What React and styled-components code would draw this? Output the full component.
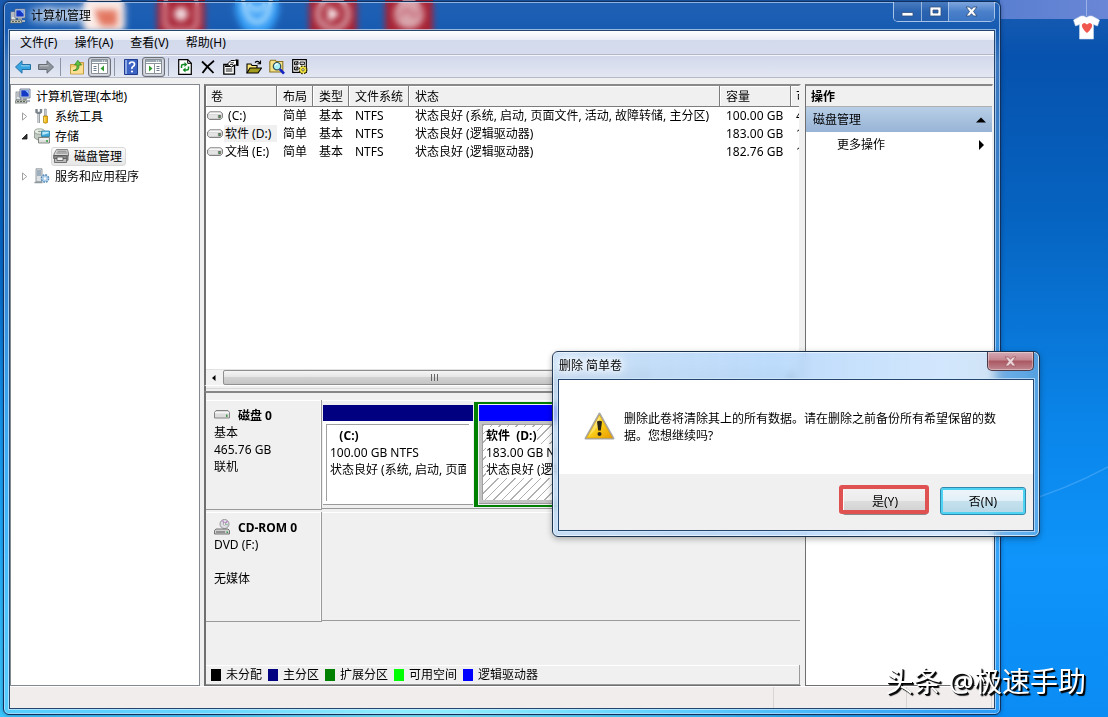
import React from 'react';
import styled, { createGlobalStyle, css } from 'styled-components';

const GlobalStyle = createGlobalStyle`
  *, *::before, *::after { box-sizing: border-box; }
  body { margin: 0; }
  body, button, table {
    font-family: 'Noto Sans', 'Noto Sans CJK SC', sans-serif;
    font-size: 12px;
    line-height: 17px;
    color: #000;
  }
  button { margin: 0; padding: 0; border: 0; background: none; }
  ul { margin: 0; padding: 0; list-style: none; }
  svg { display: block; flex: none; }
`;

/* ---------- desktop ---------- */

const Desktop = styled.div`
  position: relative;
  height: 100vh;
  min-height: 717px;
  overflow: hidden;
  background:
    radial-gradient(ellipse 560px 300px at 38% 104%, #8cf6ff 0%, rgba(80, 210, 255, 0.95) 40%, rgba(30, 150, 250, 0) 100%),
    radial-gradient(ellipse 500px 420px at 0% 100%, #2cc0ff 0%, rgba(30, 160, 250, 0) 100%),
    linear-gradient(to bottom, #1a5cb2 0%, #0652ae 8%, #0663c0 30%, #0a84e8 58%, #0e94fa 78%, #0a8cf4 100%);
`;

const DesktopTopBand = styled.div`
  position: absolute;
  top: 0;
  right: 0;
  width: 108px;
  height: 19px;
  background: linear-gradient(to right, #5a7fd0, #6a86d6);
`;

const Shortcuts = styled.div`
  display: grid;
  grid-template-columns: repeat(5, 76px);
  justify-items: center;
  padding-left: 67px;
`;

const Streaks = styled.svg`
  position: absolute;
  right: 0;
  bottom: 200px;
`;

const Shirt = styled.svg`
  position: absolute;
  top: 0;
  right: 6px;
`;

const Watermark = styled.div`
  position: absolute;
  right: 22px;
  bottom: 16px;
  font-size: 28px;
  line-height: 40px;
  color: #fff;
  text-shadow: 2px 2px 1px #000, 1px 1px 0 #111;
  white-space: nowrap;
  pointer-events: none;
`;

/* ---------- window chrome ---------- */

const Frame = styled.section`
  position: absolute;
  display: flex;
  flex-direction: column;
  padding: 0 5px 5px;
  border: 1px solid #12305c;
  border-radius: 6px;
`;

const MainFrame = styled(Frame)`
  inset: 1px 107px 2px 3px;
  background: linear-gradient(to bottom, rgba(255, 255, 255, 0.03) 0, rgba(255, 255, 255, 0.03) 28px, rgba(255, 255, 255, 0.22) 60px, rgba(255, 255, 255, 0.14) 100%);
  backdrop-filter: blur(3px);
  box-shadow: inset 0 0 0 1px rgba(200, 225, 250, 0.65), 0 0 4px rgba(0, 20, 60, 0.4);
`;

const DialogFrame = styled(Frame)`
  top: 351px;
  left: 552px;
  width: 488px;
  border-color: #1c3350;
  background: linear-gradient(to right, rgba(190, 216, 243, 0.82), rgba(170, 209, 250, 0.78) 45%, rgba(195, 222, 252, 0.75) 80%, rgba(160, 195, 225, 0.5));
  backdrop-filter: blur(4px);
  box-shadow: inset 0 0 0 1px rgba(240, 248, 255, 0.75), 0 2px 6px rgba(0, 0, 0, 0.3);
`;

const TitleBar = styled.header`
  display: flex;
  align-items: flex-start;
  height: ${(p) => p.$height}px;
`;

const Title = styled.h1`
  flex: 1;
  display: flex;
  align-items: center;
  gap: 5px;
  height: 27px;
  margin: 0;
  padding-left: 1px;
  font-size: 12px;
  font-weight: 400;
  text-shadow: 0 0 6px #fff, 0 0 8px #fff, 0 0 12px rgba(255, 255, 255, 0.9), 0 0 16px rgba(255, 255, 255, 0.8);
`;

const CaptionGroup = styled.div`
  display: flex;
  border: 1px solid rgba(215, 230, 248, 0.75);
  border-top: 0;
  border-radius: 0 0 5px 5px;
  overflow: hidden;
`;

const CaptionButton = styled.button`
  display: flex;
  align-items: center;
  justify-content: center;
  width: ${(p) => (p.$wide ? 46 : 27)}px;
  height: 19px;
  background: ${(p) =>
    p.$wide
      ? 'linear-gradient(to bottom, #7fa6de, #4b80ca 50%, #3c76c4)'
      : 'linear-gradient(to bottom, #4a7cc0, #2a63b0 50%, #245eae)'};
  & + & { border-left: 1px solid rgba(215, 230, 248, 0.6); }
`;

const DialogClose = styled.button`
  display: flex;
  align-items: center;
  justify-content: center;
  width: 47px;
  height: 19px;
  border: 1px solid #4d3a48;
  border-top: 0;
  border-radius: 0 0 5px 5px;
  background: linear-gradient(to bottom, #d3aab4, #c3858f 45%, #aa5660 50%, #c08890);
  box-shadow: inset 0 0 0 1px rgba(255, 255, 255, 0.35);
`;

const Client = styled.div`
  flex: 1;
  display: flex;
  flex-direction: column;
  min-height: 0;
  border: 1px solid #24466e;
  box-shadow: 0 0 0 1px rgba(215, 235, 252, 0.65);
  background: #f0f0f0;
`;

/* ---------- menu + toolbar ---------- */

const MenuBar = styled.nav`
  display: flex;
  gap: 1px;
  height: 24px;
  padding-left: 2px;
  border-bottom: 1px solid #b2b8c6;
  background: linear-gradient(to bottom, #fff 0, #eaedf7 9px, #d3daec 9px, #d6dced 100%);
`;

const MenuItem = styled.button`
  padding: 0 8px;
`;

const ToolBar = styled.div`
  display: flex;
  align-items: center;
  height: 23px;
  padding-left: 1px;
  border-top: 1px solid #f3f5fa;
  border-bottom: 1px solid #b4b9c4;
  background: linear-gradient(to bottom, #d2d8eb, #e3e7f3);
`;

const ToolButton = styled.button`
  display: flex;
  align-items: center;
  justify-content: center;
  width: 23px;
  height: 20px;
  border-radius: 3px;
  ${(p) =>
    p.$pressed &&
    css`
      border: 1px solid #6c7078;
      background: #dcdfe8;
      box-shadow: inset 0 0 2px rgba(0, 0, 0, 0.35);
    `}
`;

const ToolSeparator = styled.span`
  width: 8px;
  height: 18px;
  background: linear-gradient(#8d94a5, #8d94a5) 3px 0 / 1px 100% no-repeat;
`;

/* ---------- body panes ---------- */

const Body = styled.main`
  flex: 1;
  display: grid;
  grid-template-columns: 190px minmax(0, 1fr) 188px;
  column-gap: 4px;
  min-height: 0;
  padding: 6px 1px 0 0;
`;

const TreePane = styled.ul`
  padding-top: 1px;
  border: 1px solid #828790;
  background: #fff;
`;

const TreeRow = styled.li`
  display: flex;
  align-items: center;
  gap: 5px;
  height: 20px;
  padding-left: ${(p) => p.$indent}px;
`;

const SelectedNode = styled.span`
  display: flex;
  align-items: center;
  gap: 5px;
  height: 19px;
  padding: 0 3px 0 1px;
  border: 1px solid #d9d9d9;
  border-radius: 3px;
  background: linear-gradient(to bottom, #fafafa, #e6e6e6);
`;

const Twisty = styled.button`
  display: flex;
  align-items: center;
  justify-content: center;
  width: 9px;
  height: 16px;
`;

const Center = styled.div`
  display: flex;
  flex-direction: column;
  min-width: 0;
`;

const ListPane = styled.div`
  flex: 1;
  display: flex;
  flex-direction: column;
  min-width: 0;
  border: solid #707070;
  border-width: 2px 0 0 2px;
  border-top-color: #8a8a8a;
  border-right: 2px solid #f0f0f0;
  background: #fff;
`;

const VolumeTable = styled.table`
  width: 100%;
  table-layout: fixed;
  border-collapse: separate;
  border-spacing: 0;
`;

const HeadCell = styled.th`
  height: 21px;
  padding: 0 0 0 6px;
  overflow: hidden;
  border-right: 1px solid #7c7c7c;
  border-bottom: 1px solid #7c7c7c;
  background: #f0f0f0;
  box-shadow: inset 1px 1px 0 #fff;
  font-weight: 400;
  text-align: left;
  white-space: nowrap;
  &:first-child { padding-left: 5px; }
  &:last-child { border-right: 0; padding-left: 5px; }
`;

const Cell = styled.td`
  height: 18px;
  padding: 0 0 1px 6px;
  overflow: hidden;
  vertical-align: top;
  white-space: pre;
  &:first-child { padding-left: 1px; }
  &:last-child { padding-left: 5px; }
`;

const VolumeName = styled.span`
  display: flex;
  align-items: center;
  gap: 1px;
`;

const NameText = styled.span`
  flex: 1;
  padding-left: 1px;
  background: ${(p) => (p.$selected ? '#f0f0f0' : 'transparent')};
`;

const ScrollBar = styled.div`
  display: flex;
  height: 16px;
  margin-top: auto;
  background: #ececec;
  border-top: 1px solid #e2e2e2;
`;

const ScrollArrow = styled.button`
  display: flex;
  align-items: center;
  justify-content: center;
  width: 17px;
  background: #f2f2f2;
`;

const ScrollTrack = styled.div`
  flex: 1;
`;

const ScrollThumb = styled.div`
  display: flex;
  align-items: center;
  justify-content: center;
  width: 76%;
  height: 15px;
  border: 1px solid #8f8f8f;
  border-radius: 2px;
  background: linear-gradient(to bottom, #f5f5f5, #e6e6e6 45%, #d2d2d2 50%, #c4c4c4);
`;

const Splitter = styled.div`
  height: 6px;
  border-left: 2px solid #707070;
  border-top: 1px solid #fff;
  background: linear-gradient(#d8d8d8, #d8d8d8) 0 2px / 100% 1px no-repeat #f0f0f0;
`;

const GraphPane = styled.div`
  display: flex;
  flex-direction: column;
  padding-top: 7px;
  border: solid #707070;
  border-width: 2px 1px 1px 2px;
  border-right-color: #f0f0f0;
  border-top-color: #868686;
`;

const Disks = styled.div`
  display: flex;
  flex-direction: column;
  gap: 2px;
  min-height: 265px;
`;

const DiskRow = styled.div`
  display: grid;
  grid-template-columns: 116px minmax(0, 1fr);
  height: 110px;
`;

const DiskLabel = styled.div`
  padding: 7px 0 0 8px;
  border: 1px solid #9a9a9a;
  border-width: 0 1px 1px 0;
  box-shadow: inset 0 1px 0 #fff, inset -1px 0 0 #fafafa;
  white-space: pre-line;
`;

const DiskName = styled.h2`
  display: flex;
  align-items: center;
  gap: 8px;
  height: 17px;
  margin: 0;
  font-size: 12px;
  font-weight: 700;
`;

const DiskBody = styled.div`
  display: flex;
  gap: 1px;
  height: 109px;
  padding: 2px 0 1px 0;
  border-bottom: 1px solid #9a9a9a;
  box-shadow: inset 0 1px 0 #fff;
`;

const Extended = styled.div`
  flex: 1;
  display: flex;
  gap: 1px;
  min-width: 0;
  padding: 1px;
  border: solid #008000;
  border-width: 2px 4px;
`;

const Volume = styled.div`
  display: flex;
  flex-direction: column;
  flex: ${(p) => (p.$grow ? '1 1 0' : '0 0 150px')};
  min-width: 0;
  margin: ${(p) => (p.$grow ? 0 : '3px 0 2px 1px')};
  border-bottom: 1px solid #9a9a9a;
`;

const VolumeBar = styled.div`
  height: 16px;
  background: ${(p) => p.$color};
`;

const hatch = 'repeating-linear-gradient(135deg, #b0b0b0 0 1px, #fff 1px 6px)';

const VolumeFill = styled.div`
  flex: 1;
  display: flex;
  min-height: 0;
  padding: 3px 4px 3px 3px;
  background: ${(p) => (p.$selected ? '#c3c3c3' : '#fff')};
`;

const VolumeBox = styled.div`
  flex: 1;
  min-width: 0;
  padding: 2px 3px 0 3px;
  border: 1px solid #a0a0a0;
  border-width: 1px 0 0 1px;
  background: ${(p) => (p.$selected ? hatch : '#fff')};
`;

const VolumeLine = styled.div`
  width: fit-content;
  max-width: 100%;
  overflow: hidden;
  white-space: pre;
  background: #fff;
  font-weight: ${(p) => (p.$strong ? 700 : 400)};
`;

const Legend = styled.ul`
  display: flex;
  align-items: center;
  gap: 6px;
  height: 20px;
  && { padding-left: 5px; }
  border: 1px solid #9a9a9a;
  border-width: 0 1px 1px 0;
  box-shadow: inset 0 1px 0 #fff;
`;

const LegendItem = styled.li`
  display: flex;
  align-items: center;
  gap: 5px;
  &::before {
    content: '';
    width: 10px;
    height: 12px;
    background: ${(p) => p.$color};
  }
`;

const ActionPane = styled.aside`
  border: solid #707070;
  border-width: 2px 0 1px 1px;
  border-top-color: #868686;
  border-right: 1px solid #f0f0f0;
  background: #fff;
`;

const ActionHeading = styled.h2`
  height: 21px;
  margin: 0;
  padding: 2px 0 0 5px;
  border-bottom: 1px solid #b0b0b0;
  background: #f0f0f0;
  font-size: 12px;
  font-weight: 700;
`;

const ActionRow = styled.button`
  display: flex;
  align-items: center;
  justify-content: space-between;
  width: 100%;
  height: 25px;
  padding: 0 6px 0 ${(p) => (p.$group ? 7 : 31)}px;
  background: ${(p) => (p.$group ? 'linear-gradient(to bottom, #b8cfe6, #97b3d6)' : 'transparent')};
`;

const StatusBar = styled.footer`
  display: flex;
  justify-content: flex-end;
  height: 22px;
  border-top: 1px solid #fff;
  background: #f1eded;
`;

const StatusCell = styled.div`
  width: ${(p) => p.$width}px;
  border-left: 1px solid #d9d5d5;
`;

/* ---------- dialog ---------- */

const Message = styled.div`
  display: flex;
  align-items: flex-start;
  gap: 9px;
  height: 94px;
  padding: 30px 20px 0 25px;
  background: #fff;
`;

const MessageText = styled.p`
  flex: 1;
  margin: 0;
`;

const IconSlot = styled.span`
  padding-top: 2px;
`;

const DialogActions = styled.div`
  display: flex;
  justify-content: flex-end;
  gap: 12px;
  height: 56px;
  padding: 13px 7px 0;
`;

const PushButton = styled.button`
  position: relative;
  width: 86px;
  height: 28px;
  border: 1px solid ${(p) => (p.$default ? '#2f88ad' : '#8a8a8a')};
  border-radius: 3px;
  background: ${(p) =>
    p.$default
      ? 'linear-gradient(to bottom, #eff6fa, #e0eff7 50%, #c5e1ee 50%, #b6d7e6)'
      : 'linear-gradient(to bottom, #f2f2f2, #ebebeb 50%, #dddddd 50%, #cfcfcf)'};
  box-shadow: ${(p) => (p.$default ? 'inset 0 0 0 2px #4fd3f2' : 'inset 0 0 0 1px #fafafa')};
  ${(p) =>
    p.$marked &&
    css`
      &::after {
        content: '';
        position: absolute;
        inset: -3px -2px 0 -4px;
        border: 4px solid #e05252;
        border-radius: 3px;
      }
    `}
`;

/* ---------- drawings ---------- */

const ComputerIcon = () => (
  <svg width="16" height="16" viewBox="0 0 16 16">
    <rect x="1" y="4" width="5" height="8" fill="#dfe3e6" stroke="#7b8288" strokeWidth=".8" />
    <path d="M2 6h3M2 8h3" stroke="#8d959b" />
    <path d="M5 1h10v9H5z" fill="#dbe2ea" stroke="#5a6a86" strokeWidth=".8" />
    <path d="M6.300 2.300h7.400v6.300H6.300z" fill="#1238c4" />
    <path d="M10 2.300h3.700v4z" fill="#8fb8f8" />
    <path d="M8 10h4v2H8z" fill="#9aa3ad" />
    <path d="M1 12h10l1 3H0z" fill="#c9cec9" stroke="#5d645d" strokeWidth=".7" />
    <path d="M2 13.500h2M5 13.500h2M8 13.500h2" stroke="#4d554d" strokeWidth=".9" />
    <path d="M12 12h3v2h-3z" fill="#aab2bb" />
  </svg>
);

const ToolsIcon = () => (
  <svg width="16" height="16" viewBox="0 0 16 16">
    <path d="M2.500 1v3L5 5.500 7 4V1M4.700 5.500V15" fill="none" stroke="#7c848b" strokeWidth="2.400" />
    <path d="M4.700 6V15" stroke="#dde1e4" strokeWidth="1" />
    <path d="M10.500 1h1.800v7h-1.800z" fill="#c9ced2" stroke="#81888e" strokeWidth=".6" />
    <path d="M9.500 8h4v6.500q-2 1.500-4 0z" fill="#f2b90f" stroke="#a87a08" strokeWidth=".7" />
    <path d="M10.800 9v5" stroke="#ffe48a" />
  </svg>
);

const StorageIcon = () => (
  <svg width="16" height="16" viewBox="0 0 16 16">
    <path d="M.5 3.500v6.500q3 3 8 2V4z" fill="#c3ccc4" stroke="#7c867a" strokeWidth=".7" />
    <ellipse cx="5.500" cy="3.500" rx="5" ry="2.700" fill="#e6ece3" stroke="#7c867a" strokeWidth=".7" />
    <ellipse cx="5.500" cy="3.500" rx="1.600" ry=".8" fill="#8fa08f" />
    <path d="M7.500 3h8v5.500h-8z" fill="#3fa8d8" stroke="#24789f" strokeWidth=".8" />
    <path d="M8.300 3.700h6.500v1.600L8.300 7z" fill="#b8e8fa" />
    <path d="M4.500 9.500h11V15h-11z" fill="#dcdfdc" stroke="#697069" strokeWidth=".8" />
    <path d="M5.500 11h9" stroke="#fff" />
    <path d="M12 13h2" stroke="#2a9a3a" strokeWidth="1.500" />
  </svg>
);

const DiskMgmtIcon = () => (
  <svg width="16" height="16" viewBox="0 0 16 16">
    <path d="M3.500 1.500h11l1 3.500v3H1V6z" fill="#d8d8d8" stroke="#6b6b6b" strokeWidth=".8" />
    <path d="M4.500 3.200h9M3.500 5h11" stroke="#777" strokeWidth=".9" />
    <path d="M.7 7.500h13v3H.7z" fill="#8b8b8b" stroke="#4d4d4d" strokeWidth=".8" />
    <path d="M1.500 10.500h12v4h-12z" fill="#bdbdbd" stroke="#575757" strokeWidth=".8" />
    <path d="M4 9h6v3.500H4z" fill="#f1f1f1" stroke="#555" strokeWidth=".8" />
    <path d="M13.700 7.500L15.500 6v6l-1.800 2z" fill="#777" />
  </svg>
);

const ServicesIcon = () => (
  <svg width="16" height="16" viewBox="0 0 16 16">
    <path d="M2 .8h6v13H2z" fill="#dde1e4" stroke="#7f868c" strokeWidth=".8" />
    <path d="M3 3h4M3 5h4M3 7h4" stroke="#5f7d96" />
    <path d="M.5 14.500h8" stroke="#8d999f" strokeWidth="1.500" />
    <circle cx="11" cy="10.500" r="3.600" fill="#b9d7ee" stroke="#5b8db8" strokeWidth="1.600" strokeDasharray="1.800 1" />
    <circle cx="11" cy="10.500" r="2.600" fill="#a9cce9" />
    <circle cx="11" cy="10.500" r="1.200" fill="#fff" />
  </svg>
);

const DriveIcon = () => (
  <svg width="16" height="10" viewBox="0 0 16 10">
    <path d="M3 .8h10.500l2 1.700v4l-2 2H2.500l-2-1.800V3z" fill="#cfcfcf" stroke="#777" strokeWidth=".9" strokeLinejoin="round" />
    <path d="M3 1.500h10.300l1.200 1.700H1.500z" fill="#f8f8f8" />
    <path d="M1.500 4h9v3h-9z" fill="#e4e4e4" />
    <path d="M11.300 4h2.500v3.200h-2.500z" fill="#5f6a5f" />
    <path d="M12 5h1v1h-1z" fill="#35b043" />
  </svg>
);

const BareDriveIcon = () => (
  <svg width="16" height="16" viewBox="0 0 16 16">
    <path d="M2 2.500h12l1.500 2v5.500H.5V4.500z" fill="#dcdcdc" stroke="#777" strokeWidth=".9" />
    <path d="M1 4.800h14" stroke="#fff" />
    <path d="M12 6.500h1.500v2.500H12z" fill="#3f9a4a" />
  </svg>
);

const CdDriveIcon = () => (
  <svg width="16" height="18" viewBox="0 0 16 18">
    <circle cx="10.500" cy="5" r="4.500" fill="#dedee4" stroke="#8b8b92" strokeWidth=".9" />
    <path d="M10.500 5l3-3M10.500 5l-2-3.500" stroke="#b884c4" strokeWidth="1.300" />
    <path d="M10.500 5l3.500 1" stroke="#8dc59a" strokeWidth="1.200" />
    <circle cx="10.500" cy="5" r="1.200" fill="#fff" stroke="#888" strokeWidth=".6" />
    <path d="M2 10h12l1.500 1.500v3.500H.5v-3.500z" fill="#d0d0d0" stroke="#666" strokeWidth=".9" />
    <path d="M2 13h9" stroke="#555" />
    <path d="M12.500 12.500h1.500v1.500h-1.500z" fill="#3f9a4a" />
  </svg>
);

const ArrowIcon = ({ flip, fill, edge }) => (
  <svg width="16" height="14" viewBox="0 0 16 14">
    <path
      d={flip ? 'M15.500 7L9 .8v3.700H.5v5H9v3.700z' : 'M.5 7L7 .8v3.700h8.500v5H7v3.700z'}
      fill={fill}
      stroke={edge}
      strokeLinejoin="round"
    />
    <path d={flip ? 'M2 5.800h8.500' : 'M6 5.800h8.500'} stroke="#fff" strokeOpacity=".5" />
  </svg>
);

const UpFolderIcon = () => (
  <svg width="16" height="16" viewBox="0 0 16 16">
    <path d="M1.500 5.500h6L9 3.500h5.500V15h-13z" fill="#f0c865" stroke="#b98b2c" strokeWidth=".8" />
    <path d="M2 8.500L14 6v8.500H2z" fill="#fbe093" />
    <path d="M4 11.500q4.500-.5 4-5.500H5.500L8.800 1.300 12.500 6H10q.5 6.500-6 5.500z" fill="#5fc041" stroke="#2d7f1d" strokeWidth=".7" />
  </svg>
);

const PaneIcon = ({ right }) => (
  <svg width="17" height="15" viewBox="0 0 17 15">
    <path d="M.5.5h16v14H.5z" fill="#fff" stroke="#878f97" />
    <path d="M1 2h15" stroke="#9ba6b3" strokeWidth="2" />
    <path d="M11 2h1M13 2h1" stroke="#fff" />
    <path d={right ? 'M1 4.500h15M9.500 4.500v10' : 'M1 4.500h15M7.500 4.500v10'} stroke="#8c949c" />
    {right ? (
      <>
        <path d="M11.500 7.500h3M11.500 9.500h3M11.500 11.500h3" stroke="#68788a" />
        <path d="M4 6.500v6l3.500-3z" fill="#2f9b30" />
      </>
    ) : (
      <>
        <path d="M2.500 7.500h3M2.500 9.500h3M2.500 11.500h3" stroke="#68788a" />
        <path d="M13 6.500v6l-3.500-3z" fill="#2f9b30" />
      </>
    )}
  </svg>
);

const HelpIcon = () => (
  <svg width="14" height="16" viewBox="0 0 14 16">
    <path d="M.5.5h13v15H.5z" fill="#3c63c4" stroke="#1f3d8c" />
    <path d="M1 1h2v14H1z" fill="#8fa9e6" />
    <path d="M5.500 5.300Q5.500 3 8 3t2.500 2.200Q10.500 6.700 9 7.500T8 10" fill="none" stroke="#fff" strokeWidth="1.700" />
    <circle cx="8" cy="12.500" r="1.100" fill="#fff" />
  </svg>
);

const RefreshIcon = () => (
  <svg width="14" height="16" viewBox="0 0 14 16">
    <path d="M.7.700h9l3.600 3.600v11H.7z" fill="#fff" stroke="#000" strokeWidth="1.200" />
    <path d="M9.700.700v3.600h3.600" fill="none" stroke="#000" />
    <path d="M3.500 9V7q0-1.500 1.500-1.500h2M10.500 7.500v2q0 1.500-1.500 1.500H7" fill="none" stroke="#128a25" strokeWidth="1.500" />
    <path d="M6.500 3v5L9.300 5.500zM7.500 8.500v5l-2.800-2.500z" fill="#128a25" />
  </svg>
);

const DeleteIcon = () => (
  <svg width="14" height="14" viewBox="0 0 14 14">
    <path d="M1 1.500Q6 6 12.500 13M13 .8Q6 6 1.500 13" fill="none" stroke="#000" strokeWidth="1.800" />
  </svg>
);

const PropertiesIcon = () => (
  <svg width="16" height="16" viewBox="0 0 16 16">
    <path d="M.8 5.500h10.700v9.700H.8z" fill="#fff" stroke="#000" strokeWidth="1.300" />
    <path d="M2 7.200h8.500" stroke="#000" strokeWidth="1.600" />
    <path d="M2.800 10h6.500M2.800 12h6.500" stroke="#000" strokeWidth=".9" />
    <path d="M4.500 5L8 1.500h3.500l2-.7v5.400L11 6 8.500 8 6 6.500z" fill="#fff" stroke="#000" strokeWidth="1" />
    <path d="M7.500 3.800h3.500M7 5.500h3" stroke="#000" strokeWidth=".8" />
    <path d="M14.500.5v6.500" stroke="#000" strokeWidth="2" />
  </svg>
);

const OpenIcon = () => (
  <svg width="16" height="14" viewBox="0 0 16 14">
    <path d="M1 13V4h4l1 1.500h5V8" fill="#ffe97a" stroke="#000" strokeWidth="1.100" />
    <path d="M1 13L4 8h11.500l-3.500 5z" fill="#a39b1e" stroke="#000" strokeWidth="1.100" />
    <path d="M9 2.500Q11.500 0 14 3M14.500.500v3.200h-3" fill="none" stroke="#000" strokeWidth="1.100" />
  </svg>
);

const FindIcon = () => (
  <svg width="16" height="16" viewBox="0 0 16 16">
    <path d="M.8 2.500l1-1.300h4.500l1 1.300h6.500v10.500H.8z" fill="#f5e187" stroke="#8a7420" strokeWidth="1.100" />
    <circle cx="8" cy="7.200" r="3.700" fill="#a6f0f8" stroke="#2b4c58" strokeWidth="1.200" />
    <path d="M6 6.500q1-2 3-1.500" fill="none" stroke="#fff" strokeWidth="1.100" />
    <path d="M10.800 10.200l4.200 4.500" stroke="#1423c8" strokeWidth="2.600" />
  </svg>
);

const SettingsIcon = () => (
  <svg width="16" height="16" viewBox="0 0 16 16">
    <path d="M.7.700h13.600v12.600H.7z" fill="#fff" stroke="#000" strokeWidth="1.200" />
    <path d="M2.500 2.800h3.500v3H2.500zM2.500 8h3.500v3H2.500z" fill="#ddd" stroke="#000" strokeWidth=".9" />
    <path d="M3 4.500l1 1 2-3M3 9.700l1 1 2-3" fill="none" stroke="#000" strokeWidth=".9" />
    <path d="M8 3h4.500v2.500H8z" fill="#ccc" stroke="#000" strokeWidth=".8" />
    <circle cx="11" cy="10.800" r="3.500" fill="#f1e33a" stroke="#3c3800" strokeWidth="2" strokeDasharray="1.600 1.200" />
    <circle cx="11" cy="10.800" r="3.100" fill="#f4e640" />
    <circle cx="11" cy="10.800" r="1.200" fill="#fff" stroke="#4a4510" strokeWidth=".8" />
  </svg>
);

const WarningIcon = () => (
  <svg width="31" height="28" viewBox="0 0 31 28">
    <defs>
      <linearGradient id="warn" x1="0" y1="0" x2="1" y2="1">
        <stop offset="0" stopColor="#fff3a0" />
        <stop offset=".45" stopColor="#fbd21c" />
        <stop offset="1" stopColor="#e89a00" />
      </linearGradient>
    </defs>
    <path d="M15.500 1.500L29.500 26.500h-28z" fill="#d8d8d8" stroke="#a8a8a8" strokeWidth="2" strokeLinejoin="round" />
    <path d="M15.500 3L28.500 26H2.500z" fill="url(#warn)" stroke="#d09a10" strokeWidth=".6" strokeLinejoin="round" />
    <path d="M15.500 4v9L4 25z" fill="#fff" fillOpacity=".3" />
    <path d="M13 9.500q2.500-1.500 5 0l-1.200 9h-2.600z" fill="#2a2418" />
    <circle cx="15.500" cy="22" r="2" fill="#2a2418" />
  </svg>
);

const CloseGlyph = ({ fill = '#fff', edge = '#33507c' }) => (
  <svg width="13" height="11" viewBox="0 0 13 11">
    <path d="M1 1h3.500l2 2.300L8.500 1H12L8.500 5.500 12 10H8.500l-2-2.300L4.500 10H1l3.500-4.500z" fill={fill} stroke={edge} strokeWidth=".9" />
  </svg>
);

const MinGlyph = () => (
  <svg width="13" height="11" viewBox="0 0 13 11">
    <path d="M1 6.500h11v3.500H1z" fill="#fff" stroke="#33507c" strokeWidth=".8" />
  </svg>
);

const MaxGlyph = () => (
  <svg width="13" height="11" viewBox="0 0 13 11">
    <path fillRule="evenodd" d="M1 1h11v9H1zM4 4v3h5V4z" fill="#fff" stroke="#33507c" strokeWidth=".8" />
  </svg>
);

const Triangle = ({ dir }) => (
  <svg width="10" height="10" viewBox="0 0 10 10">
    <path d={{ up: 'M0 7.500h10L5 2.500z', right: 'M3 0v10l5-5z', left: 'M5.500 2v6L2 5z' }[dir]} fill="#000" />
  </svg>
);

const TwistyIcon = ({ open }) => (
  <svg width="9" height="9" viewBox="0 0 9 9">
    {open ? (
      <path d="M7 2v5H2z" fill="#333" stroke="#111" strokeWidth=".8" />
    ) : (
      <path d="M2.500.900v7.200L6.700 4.500z" fill="#fff" stroke="#a0a0a0" />
    )}
  </svg>
);

const ShortcutArt = ({ kind }) => {
  const red = kind === 'record' || kind === 'play' || kind === 'swirl';
  return (
    <svg width="48" height="40" viewBox="0 0 48 40">
      {red && <rect width="48" height="40" fill="#a51c2e" />}
      {kind === 'photo' && (
        <>
          <rect x="2" width="42" height="32" rx="6" fill="#fbe9e3" />
          <path d="M12 10h24v16H20z" fill="#e2735c" />
        </>
      )}
      {kind === 'record' && (
        <>
          <rect x="8" y="-4" width="32" height="34" rx="8" fill="none" stroke="#d99aa4" strokeWidth="4" />
          <circle cx="24" cy="14" r="7" fill="#f0d9dd" />
        </>
      )}
      {kind === 'shield' && (
        <>
          <path d="M2 0h44v12Q40 34 24 38 8 34 2 12z" fill="#2f9af5" />
          <path d="M10 -2q2 24 14 24t14-24" fill="none" stroke="#c4e8ff" strokeWidth="4" />
          <path d="M16 4q8 12 16 0" fill="none" stroke="#c4e8ff" strokeWidth="4" />
        </>
      )}
      {kind === 'play' && (
        <>
          <circle cx="24" cy="14" r="15" fill="none" stroke="#dba7af" strokeWidth="5" />
          <path d="M19 6v16l12-8z" fill="#fff" />
        </>
      )}
      {kind === 'swirl' && (
        <>
          <circle cx="24" cy="14" r="15" fill="#d9a4ac" />
          <path d="M14 18q8-14 12-5t9-4" fill="none" stroke="#c0606e" strokeWidth="3" />
        </>
      )}
    </svg>
  );
};

/* ---------- data ---------- */

const menus = ['文件(F)', '操作(A)', '查看(V)', '帮助(H)'];

const tools = [
  { label: '后退', icon: <ArrowIcon fill="#39a5e0" edge="#2272a8" /> },
  { label: '前进', icon: <ArrowIcon flip fill="#8e949b" edge="#666c73" /> },
  null,
  { label: '上一级', icon: <UpFolderIcon /> },
  { label: '显示/隐藏控制台树', icon: <PaneIcon />, pressed: true },
  null,
  { label: '帮助', icon: <HelpIcon /> },
  { label: '显示/隐藏操作窗格', icon: <PaneIcon right />, pressed: true },
  null,
  { label: '刷新', icon: <RefreshIcon /> },
  { label: '删除', icon: <DeleteIcon /> },
  { label: '属性', icon: <PropertiesIcon /> },
  { label: '打开', icon: <OpenIcon /> },
  { label: '查找', icon: <FindIcon /> },
  { label: '设置', icon: <SettingsIcon /> },
];

const columns = [
  ['卷', 71],
  ['布局', 36],
  ['类型', 36],
  ['文件系统', 60],
  ['状态', 311],
  ['容量', 71],
  ['可', null],
];

const volumes = [
  [' (C:)', '简单', '基本', 'NTFS', '状态良好 (系统, 启动, 页面文件, 活动, 故障转储, 主分区)', '100.00 GB', '4'],
  ['软件 (D:)', '简单', '基本', 'NTFS', '状态良好 (逻辑驱动器)', '183.00 GB', '1'],
  ['文档 (E:)', '简单', '基本', 'NTFS', '状态良好 (逻辑驱动器)', '182.76 GB', '1'],
];

const legend = [
  ['未分配', '#000000'],
  ['主分区', '#000080'],
  ['扩展分区', '#008000'],
  ['可用空间', '#00ff00'],
  ['逻辑驱动器', '#0000ff'],
];

function VolumeBlock({ color, name, size, status, selected, grow }) {
  return (
    <Volume $grow={grow}>
      <VolumeBar $color={color} />
      <VolumeFill $selected={selected}>
        <VolumeBox $selected={selected}>
          <VolumeLine $strong>{name}</VolumeLine>
          <VolumeLine>{size}</VolumeLine>
          <VolumeLine>{status}</VolumeLine>
        </VolumeBox>
      </VolumeFill>
    </Volume>
  );
}

function Tree() {
  return (
    <TreePane>
      <TreeRow $indent={4}><ComputerIcon />计算机管理(本地)</TreeRow>
      <TreeRow $indent={9}>
        <Twisty aria-label="展开"><TwistyIcon /></Twisty><ToolsIcon />系统工具
      </TreeRow>
      <TreeRow $indent={9}>
        <Twisty aria-label="折叠"><TwistyIcon open /></Twisty><StorageIcon />存储
      </TreeRow>
      <TreeRow $indent={40}>
        <SelectedNode><DiskMgmtIcon />磁盘管理</SelectedNode>
      </TreeRow>
      <TreeRow $indent={9}>
        <Twisty aria-label="展开"><TwistyIcon /></Twisty><ServicesIcon />服务和应用程序
      </TreeRow>
    </TreePane>
  );
}

function VolumeList() {
  return (
    <ListPane>
      <VolumeTable>
        <colgroup>
          {columns.map(([name, width]) => <col key={name} width={width ?? undefined} />)}
        </colgroup>
        <thead>
          <tr>{columns.map(([name]) => <HeadCell key={name} scope="col">{name}</HeadCell>)}</tr>
        </thead>
        <tbody>
          {volumes.map(([name, ...rest], row) => (
            <tr key={name}>
              <Cell>
                <VolumeName><DriveIcon /><NameText $selected={row === 1}>{name}</NameText></VolumeName>
              </Cell>
              {rest.map((text, i) => <Cell key={i}>{text}</Cell>)}
            </tr>
          ))}
        </tbody>
      </VolumeTable>
      <ScrollBar>
        <ScrollArrow aria-label="向左滚动"><Triangle dir="left" /></ScrollArrow>
        <ScrollTrack>
          <ScrollThumb>
            <svg width="8" height="7" viewBox="0 0 8 7">
              <path d="M.5 0v7M3.500 0v7M6.500 0v7" stroke="#666" />
            </svg>
          </ScrollThumb>
        </ScrollTrack>
        <ScrollArrow aria-label="向右滚动"><Triangle dir="right" /></ScrollArrow>
      </ScrollBar>
    </ListPane>
  );
}

function DiskGraph() {
  return (
    <GraphPane>
      <Disks>
        <DiskRow>
          <DiskLabel>
            <DiskName><BareDriveIcon />磁盘 0</DiskName>
            {'基本\n465.76 GB\n联机'}
          </DiskLabel>
          <DiskBody>
            <VolumeBlock color="#000080" name="   (C:)" size="100.00 GB NTFS" status="状态良好 (系统, 启动, 页面文件, 活动, 故障转储, 主分区)" />
            <Extended>
              <VolumeBlock grow selected color="#0000ff" name="软件  (D:)" size="183.00 GB NTFS" status="状态良好 (逻辑驱动器)" />
              <VolumeBlock grow color="#0000ff" name="文档  (E:)" size="182.76 GB NTFS" status="状态良好 (逻辑驱动器)" />
            </Extended>
          </DiskBody>
        </DiskRow>
        <DiskRow>
          <DiskLabel>
            <DiskName><CdDriveIcon />CD-ROM 0</DiskName>
            {'DVD (F:)\n\n无媒体'}
          </DiskLabel>
          <DiskBody />
        </DiskRow>
      </Disks>
      <Legend>
        {legend.map(([name, color]) => <LegendItem key={name} $color={color}>{name}</LegendItem>)}
      </Legend>
    </GraphPane>
  );
}

export default function App() {
  return (
    <Desktop>
      <GlobalStyle />
      <DesktopTopBand />
      <Shortcuts>
        {['photo', 'record', 'shield', 'play', 'swirl'].map((kind) => <ShortcutArt key={kind} kind={kind} />)}
      </Shortcuts>
      <Streaks width="108" height="60" viewBox="0 0 108 60">
        <path d="M0 52Q60 36 108 10" fill="none" stroke="#7fc4ff" strokeOpacity=".35" strokeWidth="1.500" />
      </Streaks>

      <MainFrame aria-label="计算机管理">
        <TitleBar $height={28}>
          <Title><ComputerIcon />计算机管理</Title>
          <CaptionGroup>
            <CaptionButton aria-label="最小化"><MinGlyph /></CaptionButton>
            <CaptionButton aria-label="最大化"><MaxGlyph /></CaptionButton>
            <CaptionButton $wide aria-label="关闭"><CloseGlyph /></CaptionButton>
          </CaptionGroup>
        </TitleBar>
        <Client>
          <MenuBar>
            {menus.map((m) => <MenuItem key={m}>{m}</MenuItem>)}
          </MenuBar>
          <ToolBar>
            {tools.map((t, i) =>
              t ? (
                <ToolButton key={i} aria-label={t.label} $pressed={t.pressed}>{t.icon}</ToolButton>
              ) : (
                <ToolSeparator key={i} />
              ),
            )}
          </ToolBar>
          <Body>
            <Tree />
            <Center>
              <VolumeList />
              <Splitter />
              <DiskGraph />
            </Center>
            <ActionPane>
              <ActionHeading>操作</ActionHeading>
              <ActionRow $group>磁盘管理<Triangle dir="up" /></ActionRow>
              <ActionRow>更多操作<Triangle dir="right" /></ActionRow>
            </ActionPane>
          </Body>
          <StatusBar>
            <StatusCell $width={133} />
            <StatusCell $width={85} />
            <StatusCell $width={3} />
          </StatusBar>
        </Client>
      </MainFrame>

      <DialogFrame role="dialog" aria-label="删除 简单卷">
        <TitleBar $height={27}>
          <Title>删除 简单卷</Title>
          <DialogClose aria-label="关闭"><CloseGlyph fill="#e8d4d8" edge="#a5606a" /></DialogClose>
        </TitleBar>
        <Client>
          <Message>
            <IconSlot><WarningIcon /></IconSlot>
            <MessageText>删除此卷将清除其上的所有数据。请在删除之前备份所有希望保留的数据。您想继续吗?</MessageText>
          </Message>
          <DialogActions>
            <PushButton $marked>是(Y)</PushButton>
            <PushButton $default>否(N)</PushButton>
          </DialogActions>
        </Client>
      </DialogFrame>

      <Shirt width="30" height="40" viewBox="0 0 30 40">
        <path d="M14.500 0v16" stroke="#b4c4ee" strokeOpacity=".7" />
        <path d="M9 16h3q2.500 2.500 5 0h3l7.500 4-2 6-4-1.500V39h-14V24.500l-4 1.500-2-6z" fill="#fff" stroke="#c9d6ea" strokeWidth=".6" />
        <path d="M15 33q-6-5-5-8.500 2-3 5 0 3-3 5 0 1 3.500-5 8.500z" fill="#f0574f" />
      </Shirt>
      <Watermark>头条 @极速手助</Watermark>
    </Desktop>
  );
}
